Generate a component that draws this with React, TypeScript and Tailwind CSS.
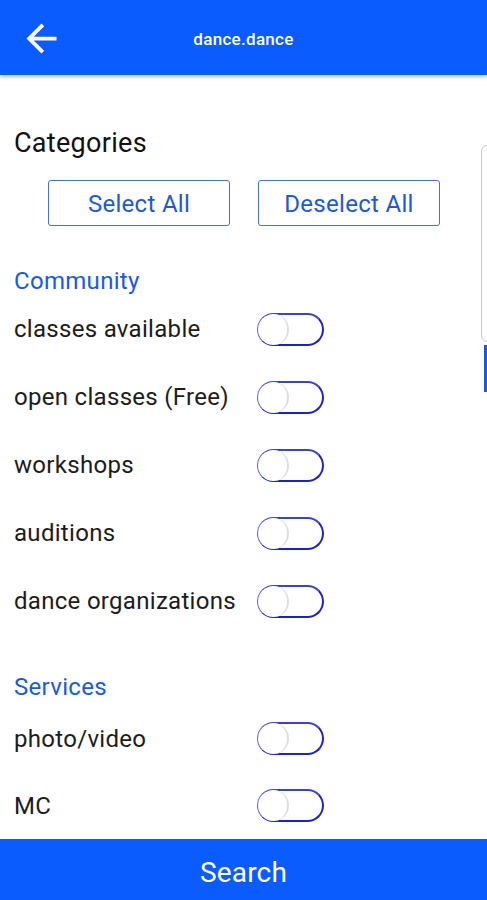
const community = ["classes available", "open classes (Free)", "workshops", "auditions", "dance organizations"];
const services = ["photo/video", "MC"];

const Toggle = () => (
  <div className="relative w-[67px] h-[33px] rounded-full border-2 border-[#1f22c9] border-l-[#5a66d4] border-t-[#3b44cf] bg-white">
    <div className="absolute left-[-1px] top-[-1px] w-[31px] h-[31px] rounded-full border-r-2 border-[#dedede] bg-white" />
  </div>
);

const Row = ({ label, h }: { label: string; h: string }) => (
  <div className={`flex items-center ${h}`}>
    <span className="w-[243px] text-[24px] tracking-[0.3px] text-[#1c1c1c]">{label}</span>
    <Toggle />
  </div>
);

export default function App() {
  return (
    <div className="relative flex flex-col h-screen overflow-hidden bg-white" style={{ fontFamily: "Roboto, sans-serif" }}>
      <header className="relative z-10 flex items-center h-[75px] bg-[#0b5cff] shadow-[0_2px_4px_rgba(0,0,0,0.25)]">
        <svg viewBox="0 0 24 24" className="absolute left-[19px] top-[16px] w-[45px] h-[45px] fill-white">
          <path d="M20 11H7.83l5.59-5.59L12 4l-8 8 8 8 1.41-1.41L7.83 13H20v-2z" />
        </svg>
        <h1 className="w-full pt-[5px] text-center text-[17px] tracking-[0.3px] font-medium text-white">dance.dance</h1>
      </header>

      <main className="flex-1 px-[14px]">
        <h2 className="mt-[54px] text-[27px] leading-[28px] tracking-[0.3px] text-[#111]">Categories</h2>
        <div className="flex gap-[28px] pl-[34px] mt-[23px]">
          <button className="w-[182px] h-[46px] pt-[2px] rounded-[3px] border-[1.5px] border-[#4a72cc] text-[24px] tracking-[0.3px] text-[#1f57d6]">Select All</button>
          <button className="w-[182px] h-[46px] pt-[2px] rounded-[3px] border-[1.5px] border-[#4a72cc] text-[24px] tracking-[0.3px] text-[#1f57d6]">Deselect All</button>
        </div>

        <h3 className="mt-[41px] text-[24px] leading-[28px] tracking-[0.3px] text-[#1a5ae0]">Community</h3>
        <div>
          {community.map((c) => (
            <Row key={c} label={c} h="h-[68px]" />
          ))}
        </div>

        <h3 className="mt-[38px] text-[24px] leading-[28px] tracking-[0.3px] text-[#1a5ae0]">Services</h3>
        <div className="mt-[4px]">
          {services.map((s) => (
            <Row key={s} label={s} h="h-[67px]" />
          ))}
        </div>
      </main>

      <div className="absolute right-[-8px] top-[145px] w-[14px] h-[197px] rounded-[6px] border border-[#c8c8c8] bg-white" />
      <div className="absolute right-0 top-[345px] w-[3px] h-[47px] bg-[#1a5ae0]" />

      <button className="relative z-10 h-[61px] shrink-0 pt-[6px] bg-[#0b5cff] text-[28px] tracking-[0.2px] text-white">Search</button>
    </div>
  );
}
